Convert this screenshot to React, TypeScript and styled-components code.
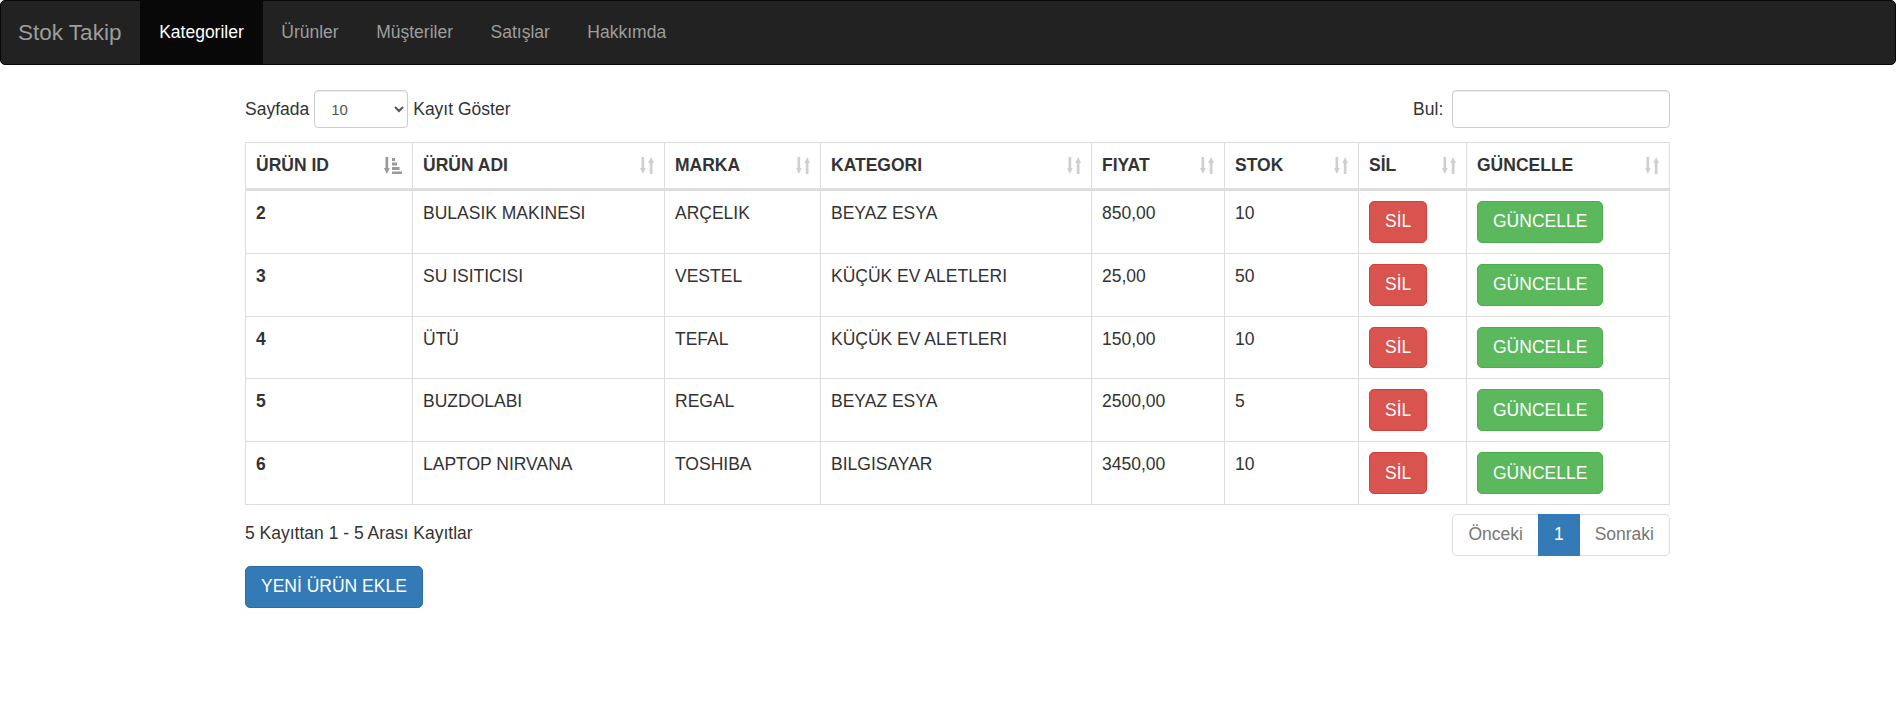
import React from "react";
import styled, { createGlobalStyle } from "styled-components";

const GlobalStyle = createGlobalStyle`
  * { box-sizing: border-box; }
  body {
    margin: 0;
    font-family: "Liberation Sans", Arial, Helvetica, sans-serif;
    font-size: 17.5px;
    line-height: 25px;
    color: #333;
    background: #fff;
  }
`;

const Navbar = styled.nav`
  display: flex;
  height: 65px;
  background: #222;
  border: 1px solid #080808;
  border-radius: 5px;
  margin-bottom: 25px;
`;

const Brand = styled.a`
  display: flex;
  align-items: center;
  height: 63px;
  padding: 0 19px 0 17px;
  font-size: 22.5px;
  line-height: 25px;
  color: #9d9d9d;
  text-decoration: none;
`;

const NavItem = styled.a<{ $active?: boolean }>`
  display: flex;
  align-items: center;
  height: 63px;
  padding: 0 18.75px;
  color: ${(p) => (p.$active ? "#fff" : "#9d9d9d")};
  background: ${(p) => (p.$active ? "#080808" : "transparent")};
  text-decoration: none;
`;

const Container = styled.main`
  width: 1444px;
  margin: 0 auto;
  padding-left: 19px;
`;

const TopBar = styled.div`
  display: flex;
  justify-content: space-between;
  align-items: center;
  height: 38px;
`;

const Label = styled.label`
  display: flex;
  align-items: center;
  gap: 5px;
  font-weight: normal;
`;

const SearchLabel = styled(Label)`
  gap: 8.75px;
`;

const Select = styled.select`
  width: 94px;
  height: 37.5px;
  padding: 0 8px 0 12px;
  font-family: inherit;
  font-size: 15px;
  color: #555;
  background: #fff;
  border: 1px solid #ccc;
  border-radius: 4px;
  box-shadow: inset 0 1px 1px rgba(0, 0, 0, 0.075);
`;

const SearchInput = styled.input`
  width: 218px;
  height: 37.5px;
  padding: 0 12px;
  font-family: inherit;
  font-size: 15px;
  color: #555;
  border: 1px solid #ccc;
  border-radius: 4px;
  box-shadow: inset 0 1px 1px rgba(0, 0, 0, 0.075);
`;

const Table = styled.table`
  width: 100%;
  margin-top: 14px;
  border-collapse: collapse;
  table-layout: fixed;
  border: 1px solid #ddd;
`;

const Th = styled.th`
  padding: 10px;
  border: 1px solid #ddd;
  border-bottom: 3px solid #ddd;
  text-align: left;
  font-weight: bold;
  vertical-align: bottom;
`;

const ThInner = styled.div`
  display: flex;
  align-items: center;
  justify-content: space-between;
  height: 25px;
`;

const Td = styled.td<{ $bold?: boolean }>`
  padding: 10px;
  border: 1px solid #ddd;
  vertical-align: top;
  font-weight: ${(p) => (p.$bold ? "bold" : "normal")};
`;

const variants = {
  danger: { bg: "#d9534f", border: "#d43f3a" },
  success: { bg: "#5cb85c", border: "#4cae4c" },
  primary: { bg: "#337ab7", border: "#2e6da4" },
};

const Btn = styled.button<{ $variant: keyof typeof variants }>`
  display: inline-block;
  height: 41.8px;
  padding: 0 15px;
  font-family: inherit;
  font-size: 17.5px;
  line-height: 25px;
  color: #fff;
  background: ${(p) => variants[p.$variant].bg};
  border: 1px solid ${(p) => variants[p.$variant].border};
  border-radius: 5px;
  cursor: pointer;
  vertical-align: top;
`;

const BottomBar = styled.div`
  display: flex;
  justify-content: space-between;
  align-items: flex-start;
  margin-top: 6.5px;
`;

const Info = styled.div`
  padding-top: 10px;
`;

const Pagination = styled.div`
  display: flex;
  margin: 2.5px 0;
`;

const PageItem = styled.a<{ $active?: boolean }>`
  display: block;
  padding: 7.5px 15px;
  line-height: 25px;
  margin-left: -1px;
  color: ${(p) => (p.$active ? "#fff" : "#777")};
  background: ${(p) => (p.$active ? "#337ab7" : "#fff")};
  border: 1px solid ${(p) => (p.$active ? "#337ab7" : "#ddd")};
  text-decoration: none;
  position: relative;
  z-index: ${(p) => (p.$active ? 2 : 1)};
  &:first-child {
    margin-left: 0;
    border-radius: 5px 0 0 5px;
  }
  &:last-child {
    border-radius: 0 5px 5px 0;
  }
`;

const AddRow = styled.div`
  margin-top: 7.5px;
`;

const SortBoth = () => (
  <svg width="14" height="17" viewBox="0 0 14 17" fill="#cfcfcf">
    <rect x="1.5" y="0" width="2.7" height="12" />
    <polygon points="0,11 5.7,11 2.85,17" />
    <polygon points="8.3,6 14,6 11.15,0" />
    <rect x="9.8" y="5" width="2.7" height="12" />
  </svg>
);

const SortAsc = () => (
  <svg width="18" height="17" viewBox="0 0 18 17" fill="#999">
    <rect x="1.5" y="0" width="2.7" height="12" />
    <polygon points="0,11 5.7,11 2.85,17" />
    <rect x="8" y="1" width="3" height="3" />
    <rect x="8" y="5.5" width="5" height="3" />
    <rect x="8" y="10" width="7.5" height="3" />
    <rect x="8" y="14.5" width="10" height="2.5" />
  </svg>
);

const columns = [
  { title: "ÜRÜN ID", width: 167 },
  { title: "ÜRÜN ADI", width: 252 },
  { title: "MARKA", width: 156 },
  { title: "KATEGORI", width: 271 },
  { title: "FIYAT", width: 133 },
  { title: "STOK", width: 134 },
  { title: "SİL", width: 108 },
  { title: "GÜNCELLE", width: 203 },
];

const rows = [
  ["2", "BULASIK MAKINESI", "ARÇELIK", "BEYAZ ESYA", "850,00", "10"],
  ["3", "SU ISITICISI", "VESTEL", "KÜÇÜK EV ALETLERI", "25,00", "50"],
  ["4", "ÜTÜ", "TEFAL", "KÜÇÜK EV ALETLERI", "150,00", "10"],
  ["5", "BUZDOLABI", "REGAL", "BEYAZ ESYA", "2500,00", "5"],
  ["6", "LAPTOP NIRVANA", "TOSHIBA", "BILGISAYAR", "3450,00", "10"],
];

export default function App() {
  return (
    <>
      <GlobalStyle />
      <Navbar>
        <Brand href="#">Stok Takip</Brand>
        <NavItem href="#" $active>
          Kategoriler
        </NavItem>
        <NavItem href="#">Ürünler</NavItem>
        <NavItem href="#">Müşteriler</NavItem>
        <NavItem href="#">Satışlar</NavItem>
        <NavItem href="#">Hakkımda</NavItem>
      </Navbar>
      <Container>
        <TopBar>
          <Label>
            Sayfada
            <Select defaultValue="10">
              <option value="10">10</option>
              <option value="25">25</option>
              <option value="50">50</option>
              <option value="100">100</option>
            </Select>
            Kayıt Göster
          </Label>
          <SearchLabel>
            Bul:
            <SearchInput type="search" />
          </SearchLabel>
        </TopBar>
        <Table>
          <colgroup>
            {columns.map((c) => (
              <col key={c.title} style={{ width: c.width }} />
            ))}
          </colgroup>
          <thead>
            <tr>
              {columns.map((c, i) => (
                <Th key={c.title}>
                  <ThInner>
                    <span>{c.title}</span>
                    {i === 0 ? <SortAsc /> : <SortBoth />}
                  </ThInner>
                </Th>
              ))}
            </tr>
          </thead>
          <tbody>
            {rows.map((r) => (
              <tr key={r[0]}>
                <Td $bold>{r[0]}</Td>
                <Td>{r[1]}</Td>
                <Td>{r[2]}</Td>
                <Td>{r[3]}</Td>
                <Td>{r[4]}</Td>
                <Td>{r[5]}</Td>
                <Td>
                  <Btn $variant="danger">SİL</Btn>
                </Td>
                <Td>
                  <Btn $variant="success">GÜNCELLE</Btn>
                </Td>
              </tr>
            ))}
          </tbody>
        </Table>
        <BottomBar>
          <Info>5 Kayıttan 1 - 5 Arası Kayıtlar</Info>
          <Pagination>
            <PageItem href="#">Önceki</PageItem>
            <PageItem href="#" $active>
              1
            </PageItem>
            <PageItem href="#">Sonraki</PageItem>
          </Pagination>
        </BottomBar>
        <AddRow>
          <Btn $variant="primary">YENİ ÜRÜN EKLE</Btn>
        </AddRow>
      </Container>
    </>
  );
}
